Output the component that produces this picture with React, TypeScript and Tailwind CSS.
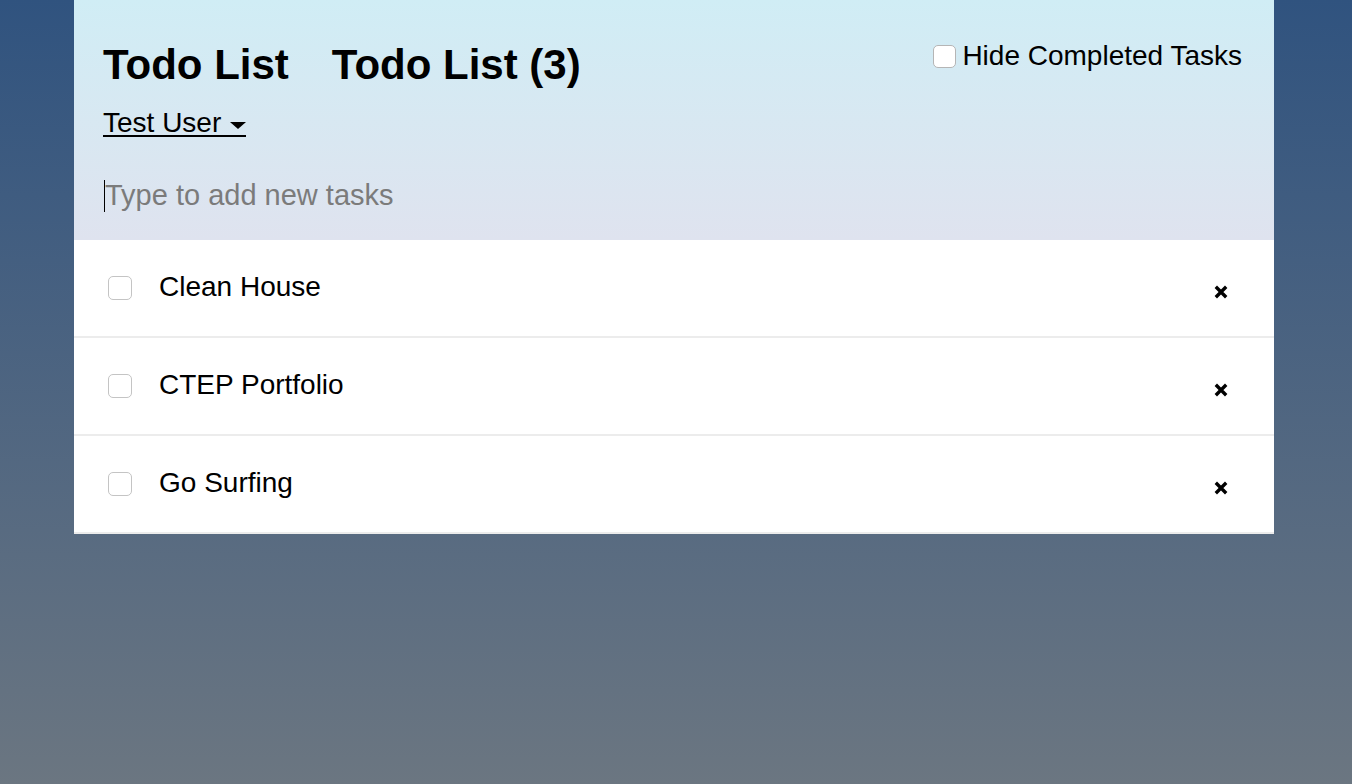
import React, { useState } from 'react';

type Task = { id: number; text: string; done: boolean };

const initialTasks: Task[] = [
  { id: 1, text: 'Clean House', done: false },
  { id: 2, text: 'CTEP Portfolio', done: false },
  { id: 3, text: 'Go Surfing', done: false },
];

const CloseIcon = () => (
  <svg width="14" height="14" viewBox="0 0 14 14" className="block">
    <path d="M1.8 1.8 L12.2 12.2 M12.2 1.8 L1.8 12.2" stroke="#000" strokeWidth="3.4" strokeLinecap="butt" />
  </svg>
);

const App = () => {
  const [tasks, setTasks] = useState<Task[]>(initialTasks);
  const [hideCompleted, setHideCompleted] = useState(false);
  const [text, setText] = useState('');

  const visible = hideCompleted ? tasks.filter((t) => !t.done) : tasks;
  const incomplete = tasks.filter((t) => !t.done).length;

  return (
    <div
      className="min-h-screen w-full bg-gradient-to-b from-[#30537f] to-[#6b7681] text-black"
      style={{ fontFamily: '"Liberation Sans", Arial, sans-serif' }}
    >
      <div className="ml-[74px] w-[1200px] bg-white">
        {/* Header */}
        <header className="h-[240px] bg-gradient-to-b from-[#d0edf5] to-[#dfe3ef] px-[29px] pt-[44px]">
          <div className="flex items-start justify-between">
            <div className="flex gap-[43px]">
              <h1 className="text-[42px] leading-[41px] font-bold">Todo List</h1>
              <h1 className="text-[42px] leading-[41px] font-bold">Todo List ({incomplete})</h1>
            </div>
            <label className="mr-[3px] -mt-[4px] flex items-center gap-[6px] text-[28px] leading-[32px]">
              <input
                type="checkbox"
                checked={hideCompleted}
                onChange={() => setHideCompleted(!hideCompleted)}
                className="h-[23px] w-[23px] appearance-none rounded-[5px] border border-[#b5b5b5] bg-white"
              />
              Hide Completed Tasks
            </label>
          </div>
          <div className="mt-[26px]">
            <button className="inline-flex items-center gap-[9px] border-b-[2px] border-black text-[28px] leading-[24px]">
              Test User
              <svg width="16" height="7" viewBox="0 0 16 7" className="mt-[4px]">
                <path d="M0 0 L16 0 L8 7 Z" fill="#000" />
              </svg>
            </button>
          </div>
          <form
            className="mt-[37px]"
            onSubmit={(e) => {
              e.preventDefault();
              if (!text.trim()) return;
              setTasks([...tasks, { id: Date.now(), text, done: false }]);
              setText('');
            }}
          >
            <div className="flex items-center">
              <span className="ml-[1px] h-[32px] w-[1px] bg-black" />
              <input
                value={text}
                onChange={(e) => setText(e.target.value)}
                placeholder="Type to add new tasks"
                className="h-[40px] w-full bg-transparent text-[29px] outline-none placeholder:text-[#7b7b7b]"
              />
            </div>
          </form>
        </header>

        {/* Tasks */}
        <ul>
          {visible.map((t) => (
            <li
              key={t.id}
              className="flex h-[98px] items-center border-b-2 border-[#ececec] pl-[34px] pr-[46px]"
            >
              <input
                type="checkbox"
                checked={t.done}
                onChange={() => setTasks(tasks.map((x) => (x.id === t.id ? { ...x, done: !x.done } : x)))}
                className="h-[24px] w-[24px] shrink-0 appearance-none rounded-[5px] border border-[#c4c4c4] bg-white"
              />
              <span className={`ml-[27px] -mt-[2px] flex-1 text-[28px] ${t.done ? 'line-through' : ''}`}>{t.text}</span>
              <button
                className="mt-[8px]"
                onClick={() => setTasks(tasks.filter((x) => x.id !== t.id))}
              >
                <CloseIcon />
              </button>
            </li>
          ))}
        </ul>
      </div>
    </div>
  );
};

export default App;
